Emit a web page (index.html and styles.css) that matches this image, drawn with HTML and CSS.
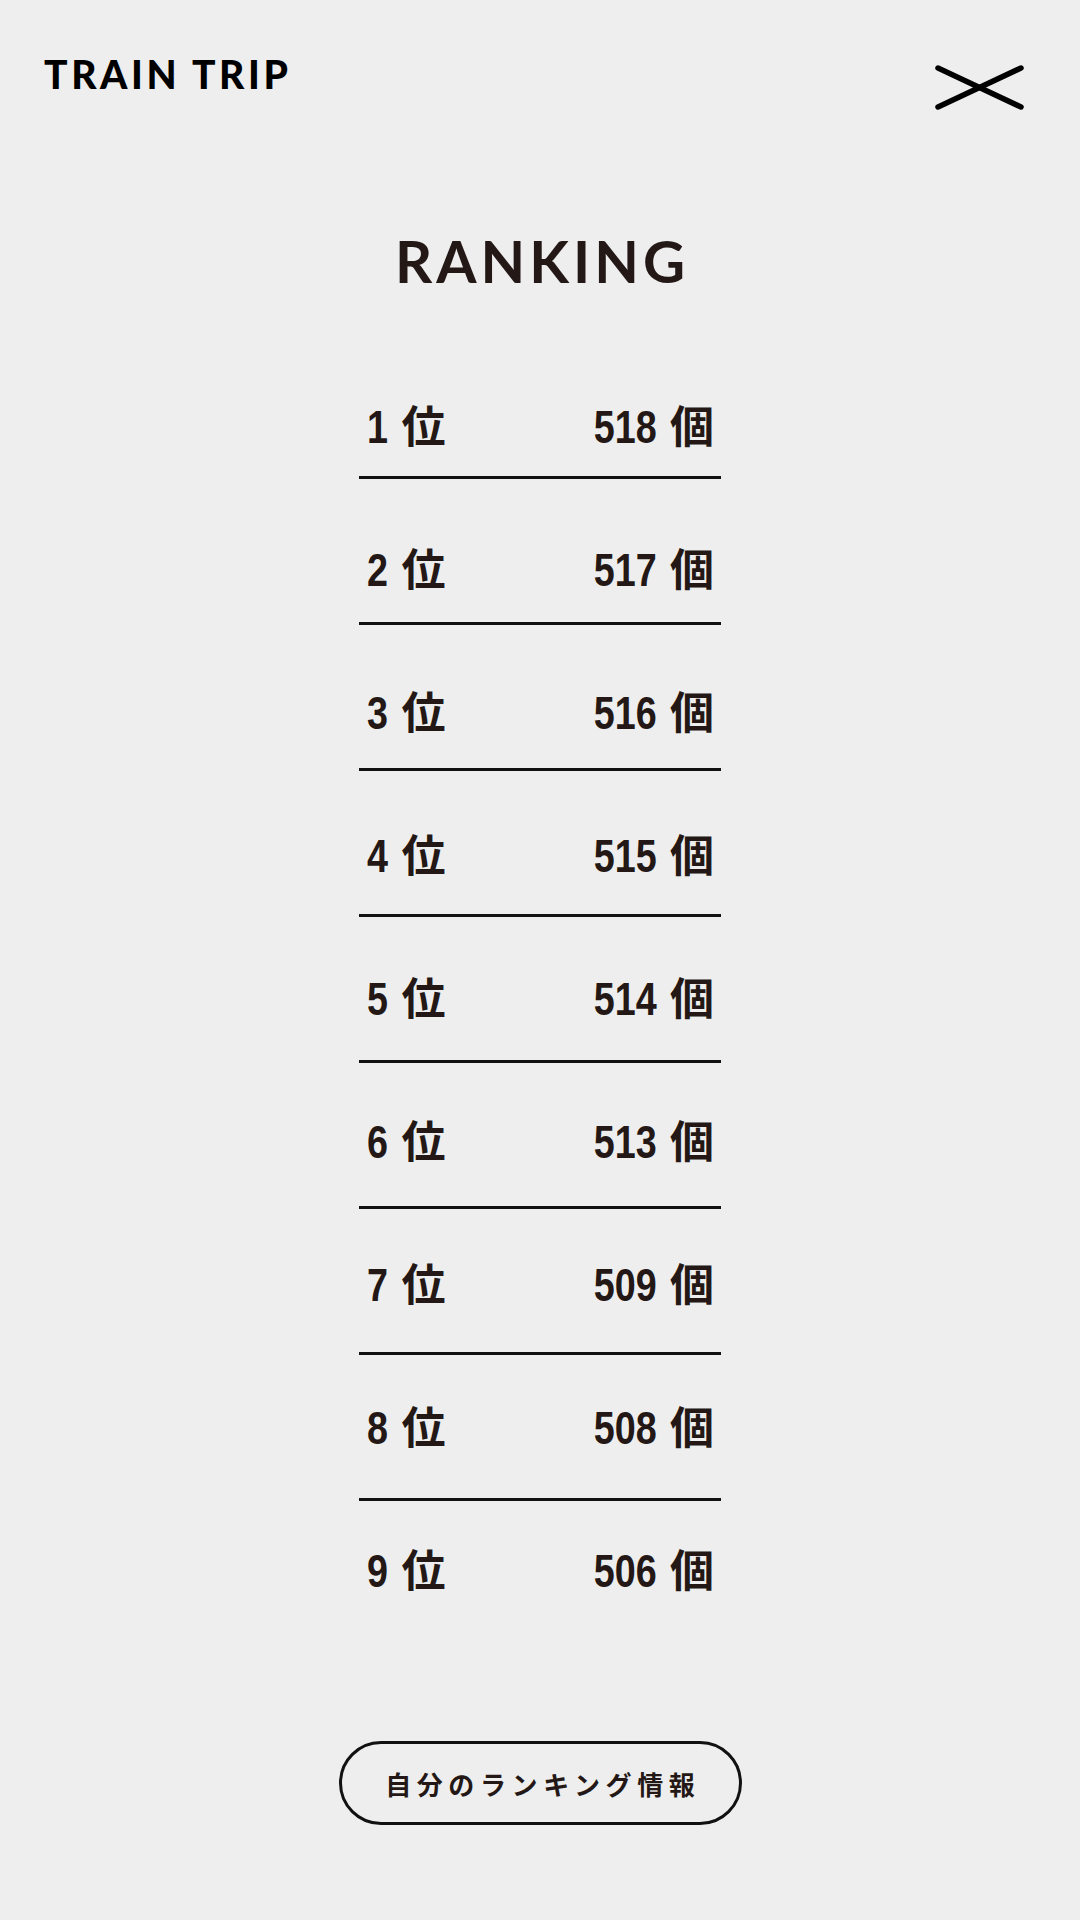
FILE: index.html
```html
<!DOCTYPE html>
<html lang="ja">
<head>
<meta charset="utf-8">
<title>TRAIN TRIP - RANKING</title>
<link rel="stylesheet" href="styles.css">
</head>
<body>
<div class="page">
  <header class="header">
    <h1 class="logo">TRAIN TRIP</h1>
    <button class="close" aria-label="閉じる">
      <svg width="94" height="50" viewBox="0 0 94 50" aria-hidden="true">
        <line x1="5" y1="5" x2="88" y2="44" />
        <line x1="5" y1="44" x2="88" y2="5" />
      </svg>
    </button>
  </header>

  <h2 class="title">RANKING</h2>

  <ol class="ranking">
    <li class="row"><span class="rank"><span class="num">1</span> <span class="unit">位</span></span><span class="count"><span class="num">518</span> <span class="unit">個</span></span></li>
    <li class="row"><span class="rank"><span class="num">2</span> <span class="unit">位</span></span><span class="count"><span class="num">517</span> <span class="unit">個</span></span></li>
    <li class="row"><span class="rank"><span class="num">3</span> <span class="unit">位</span></span><span class="count"><span class="num">516</span> <span class="unit">個</span></span></li>
    <li class="row"><span class="rank"><span class="num">4</span> <span class="unit">位</span></span><span class="count"><span class="num">515</span> <span class="unit">個</span></span></li>
    <li class="row"><span class="rank"><span class="num">5</span> <span class="unit">位</span></span><span class="count"><span class="num">514</span> <span class="unit">個</span></span></li>
    <li class="row"><span class="rank"><span class="num">6</span> <span class="unit">位</span></span><span class="count"><span class="num">513</span> <span class="unit">個</span></span></li>
    <li class="row"><span class="rank"><span class="num">7</span> <span class="unit">位</span></span><span class="count"><span class="num">509</span> <span class="unit">個</span></span></li>
    <li class="row"><span class="rank"><span class="num">8</span> <span class="unit">位</span></span><span class="count"><span class="num">508</span> <span class="unit">個</span></span></li>
    <li class="row"><span class="rank"><span class="num">9</span> <span class="unit">位</span></span><span class="count"><span class="num">506</span> <span class="unit">個</span></span></li>
  </ol>

  <div class="actions">
    <button class="my-ranking">自分のランキング情報</button>
  </div>
</div>
</body>
</html>
```

FILE: styles.css
```css
* {
  box-sizing: border-box;
}

html,
body {
  margin: 0;
  padding: 0;
  background: #eeeeee;
}

.page {
  width: 1080px;
  min-height: 1920px;
  background: #eeeeee;
  color: #231815;
}

.header {
  display: flex;
  justify-content: space-between;
  align-items: flex-start;
  padding: 55px 53px 0 44px;
}

.logo {
  margin: 0;
  font-family: Lato, "Liberation Sans", sans-serif;
  font-weight: 900;
  font-size: 39px;
  line-height: 1;
  letter-spacing: 3.6px;
  color: #000;
}

.close {
  margin: 8px 0 0;
  padding: 0;
  border: 0;
  background: none;
  display: block;
  cursor: pointer;
}

.close svg {
  display: block;
}

.close line {
  stroke: #000;
  stroke-width: 5.5;
  stroke-linecap: round;
}

.title {
  margin: 119px 0 0;
  padding-left: 4px;
  text-align: center;
  font-family: Lato, "Liberation Sans", sans-serif;
  font-weight: 700;
  font-size: 58px;
  line-height: 1;
  letter-spacing: 4px;
  color: #231815;
}

.ranking {
  list-style: none;
  margin: 62.5px auto 0;
  padding: 0;
  width: 362px;
  background-image: repeating-linear-gradient(to bottom, #111 0 3px, transparent 3px 146px);
  background-size: 100% 1025px;
  background-position: 0 123px;
  background-repeat: no-repeat;
}

.row {
  display: flex;
  justify-content: space-between;
  align-items: baseline;
  height: 143px;
  padding: 0 7px 0 8px;
  font-family: "Liberation Sans", sans-serif;
  font-weight: 700;
  font-size: 46px;
  line-height: 143px;
  color: #231815;
}

.rank,
.count {
  display: flex;
  align-items: baseline;
}

.num {
  display: inline-block;
  font-family: "Liberation Sans", sans-serif;
  font-weight: 700;
  font-size: 46px;
  transform: scaleX(0.82);
}

.rank .num {
  transform-origin: left center;
  margin-right: 9px;
}

.count .num {
  transform-origin: right center;
  margin-right: 13px;
}

.unit {
  font-family: "Noto Sans CJK JP", sans-serif;
  font-weight: 700;
  font-size: 44px;
}

.actions {
  display: flex;
  justify-content: center;
  margin-top: 101.5px;
}

.my-ranking {
  width: 403px;
  height: 84px;
  border: 3px solid #111;
  border-radius: 42px;
  background: transparent;
  padding: 0 0 0 5.6px;
  font-family: "Noto Sans CJK JP", sans-serif;
  font-weight: 700;
  font-size: 26px;
  letter-spacing: 5.6px;
  color: #231815;
  cursor: pointer;
}
```
